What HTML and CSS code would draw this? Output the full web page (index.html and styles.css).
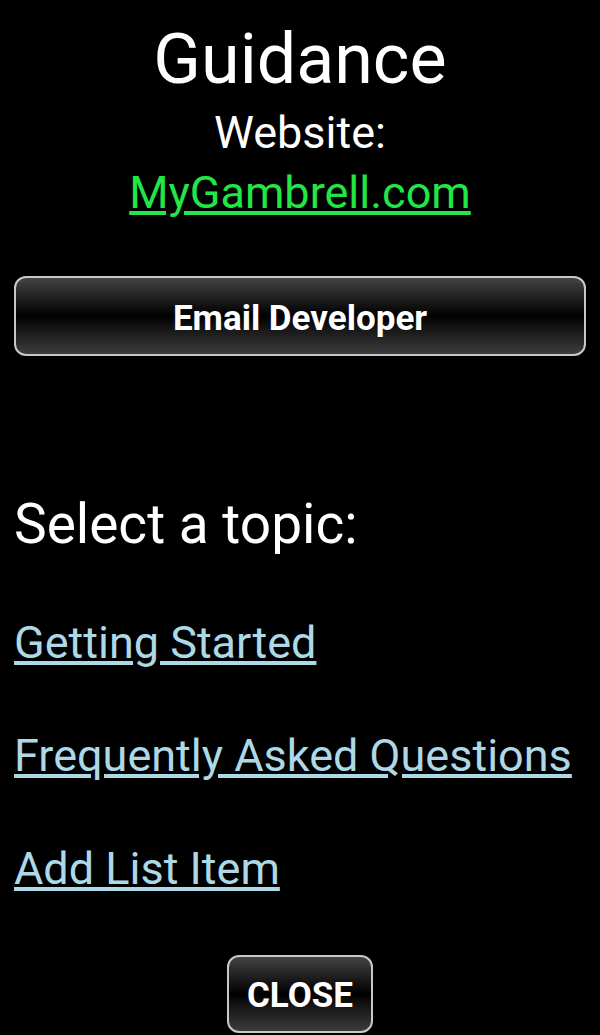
FILE: index.html
```html
<!DOCTYPE html>
<html lang="en">
<head>
    <meta charset="UTF-8">
    <title>Guidance</title>
    <link rel="stylesheet" href="styles.css">
</head>
<body>
<div class="page">
    <h1 class="title">Guidance</h1>
    <div class="site-label">Website:</div>
    <a class="site-link" href="#">MyGambrell.com</a>
    <button class="btn btn-wide">Email Developer</button>
    <div class="topic-head">Select a topic:</div>
    <ul class="topics">
        <li><a href="#">Getting Started</a></li>
        <li><a href="#">Frequently Asked Questions</a></li>
        <li><a href="#">Add List Item</a></li>
    </ul>
    <div class="footer">
        <button class="btn btn-close">CLOSE</button>
    </div>
</div>
</body>
</html>
```
FILE: styles.css
```css
* {
    padding: 0;
    margin: 0;
    list-style: none;
    box-sizing: border-box;
}

body {
    background: #000;
    color: #fff;
    font-family: Roboto, "Liberation Sans", sans-serif;
}

.page {
    padding: 0 14px;
    display: flex;
    flex-direction: column;
}

.title {
    margin-top: 19px;
    font-size: 70px;
    font-weight: normal;
    line-height: 80px;
    text-align: center;
}

.site-label {
    margin-top: 10px;
    font-size: 45px;
    line-height: 48px;
    text-align: center;
}

.site-link {
    margin-top: 12px;
    align-self: center;
    font-size: 45px;
    line-height: 48px;
    color: #22e645;
}

.btn {
    font-family: Roboto, "Liberation Sans", sans-serif;
    font-weight: bold;
    color: #fff;
    border: 2px solid #c8c8c8;
    border-radius: 12px;
    background: linear-gradient(#444 0%, #1a1a1a 30%, #000 50%, #1a1a1a 70%, #3c3c3c 100%);
}

.btn-wide {
    margin-top: 59px;
    height: 80px;
    padding-top: 4px;
    font-size: 35px;
}

.topic-head {
    margin-top: 138px;
    font-size: 55px;
    line-height: 60px;
}

.topics {
    margin-top: 65px;
    display: flex;
    flex-direction: column;
    gap: 65px;
}

.topics a {
    font-size: 45px;
    line-height: 48px;
    color: #add8e6;
}

.footer {
    margin-top: 62px;
    display: flex;
    justify-content: center;
}

.btn-close {
    width: 146px;
    height: 78px;
    padding-top: 2px;
    font-size: 35px;
}
```
